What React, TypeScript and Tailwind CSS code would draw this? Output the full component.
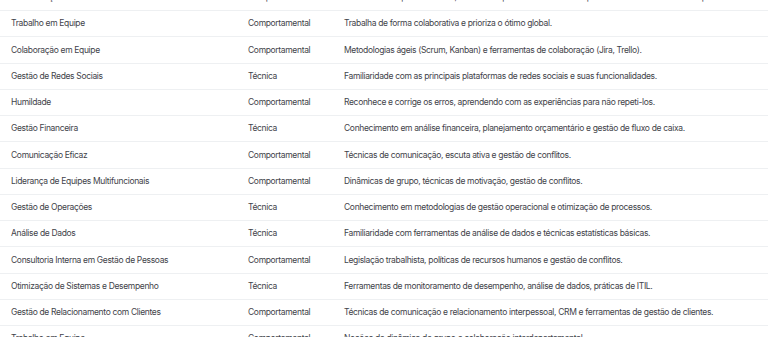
const rows: [string, string, string][] = [
  ['Comunicação', 'Comportamental', 'Escuta com empatia e clareza, sintetiza os pontos de vista e se expressa com assertividade e respeito.'],
  ['Trabalho em Equipe', 'Comportamental', 'Trabalha de forma colaborativa e prioriza o ótimo global.'],
  ['Colaboração em Equipe', 'Comportamental', 'Metodologias ágeis (Scrum, Kanban) e ferramentas de colaboração (Jira, Trello).'],
  ['Gestão de Redes Sociais', 'Técnica', 'Familiaridade com as principais plataformas de redes sociais e suas funcionalidades.'],
  ['Humildade', 'Comportamental', 'Reconhece e corrige os erros, aprendendo com as experiências para não repeti-los.'],
  ['Gestão Financeira', 'Técnica', 'Conhecimento em análise financeira, planejamento orçamentário e gestão de fluxo de caixa.'],
  ['Comunicação Eficaz', 'Comportamental', 'Técnicas de comunicação, escuta ativa e gestão de conflitos.'],
  ['Liderança de Equipes Multifuncionais', 'Comportamental', 'Dinâmicas de grupo, técnicas de motivação, gestão de conflitos.'],
  ['Gestão de Operações', 'Técnica', 'Conhecimento em metodologias de gestão operacional e otimização de processos.'],
  ['Análise de Dados', 'Técnica', 'Familiaridade com ferramentas de análise de dados e técnicas estatísticas básicas.'],
  ['Consultoria Interna em Gestão de Pessoas', 'Comportamental', 'Legislação trabalhista, políticas de recursos humanos e gestão de conflitos.'],
  ['Otimização de Sistemas e Desempenho', 'Técnica', 'Ferramentas de monitoramento de desempenho, análise de dados, práticas de ITIL.'],
  ['Gestão de Relacionamento com Clientes', 'Comportamental', 'Técnicas de comunicação e relacionamento interpessoal, CRM e ferramentas de gestão de clientes.'],
  ['Trabalho em Equipe', 'Comportamental', 'Noções de dinâmica de grupo e colaboração interdepartamental.'],
];

export default function App() {
  return (
    <div className="h-[337px] w-[768px] overflow-hidden bg-white font-['Inter',sans-serif] text-[8.5px] tracking-[-0.04em] text-[#3f434a]">
      <div className="-mt-[15.27px]">
        {rows.map(([name, kind, desc], i) => (
          <div
            key={i}
            className="grid h-[26.27px] grid-cols-[237px_96px_1fr] items-center border-b border-[#eef0f2]"
          >
            <div className="truncate px-[11px]">{name}</div>
            <div className="truncate px-[11px]">{kind}</div>
            <div className="truncate px-[11px]">{desc}</div>
          </div>
        ))}
      </div>
    </div>
  );
}
